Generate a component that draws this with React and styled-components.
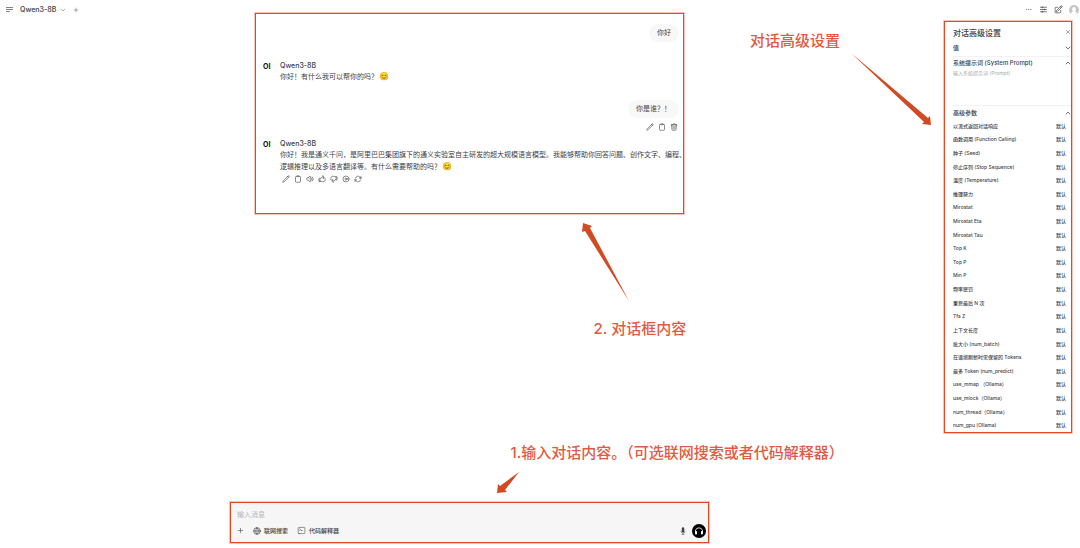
import React from 'react'
import styled, { createGlobalStyle } from 'styled-components'
import {
  HiOutlineAdjustmentsHorizontal,
  HiOutlineArrowPath,
  HiOutlineBars3BottomLeft,
  HiOutlineChevronDown,
  HiOutlineChevronUp,
  HiOutlineClipboard,
  HiOutlineCommandLine,
  HiOutlineEllipsisHorizontal,
  HiOutlineHandThumbDown,
  HiOutlineHandThumbUp,
  HiOutlinePencil,
  HiOutlinePencilSquare,
  HiOutlinePlayCircle,
  HiOutlinePlus,
  HiOutlineSpeakerWave,
  HiOutlineTrash,
  HiOutlineXMark,
  HiMicrophone
} from 'react-icons/hi2'
import { FaHeadphones } from 'react-icons/fa6'
import { Globe } from 'lucide-react'

const params = [
  '以流式返回对话响应',
  '函数调用 (Function Calling)',
  '种子 (Seed)',
  '停止序列 (Stop Sequence)',
  '温度 (Temperature)',
  '推理努力',
  'Mirostat',
  'Mirostat Eta',
  'Mirostat Tau',
  'Top K',
  'Top P',
  'Min P',
  '频率惩罚',
  '重复最后 N 次',
  'Tfs Z',
  '上下文长度',
  '批大小 (num_batch)',
  '在语境刷新时需保留的 Tokens',
  '最多 Token (num_predict)',
  'use_mmap （Ollama）',
  'use_mlock（Ollama）',
  'num_thread（Ollama）',
  'num_gpu (Ollama)'
]

const userActions = [
  ['编辑', HiOutlinePencil],
  ['复制', HiOutlineClipboard],
  ['删除', HiOutlineTrash]
]

const replyActions = [
  ['编辑', HiOutlinePencil],
  ['复制', HiOutlineClipboard],
  ['朗读', HiOutlineSpeakerWave],
  ['赞', HiOutlineHandThumbUp],
  ['踩', HiOutlineHandThumbDown],
  ['继续', HiOutlinePlayCircle],
  ['重新生成', HiOutlineArrowPath]
]

const ActionBar = ({ items, right }) => (
  <Actions $right={right}>
    {items.map(([name, Icon]) => (
      <IconButton key={name} aria-label={name}>
        <Icon size={8} strokeWidth={2} />
      </IconButton>
    ))}
  </Actions>
)

const Reply = ({ children, gap }) => (
  <ReplyView $gap={gap}>
    <Logo>OI</Logo>
    <div>
      <Name>Qwen3-8B</Name>
      {children}
    </div>
  </ReplyView>
)

const TopBar = () => (
  <Header>
    <IconButton aria-label="菜单">
      <HiOutlineBars3BottomLeft size={9} strokeWidth={2} />
    </IconButton>
    <ModelButton>
      Qwen3-8B
      <HiOutlineChevronDown size={6} strokeWidth={2} />
    </ModelButton>
    <IconButton aria-label="添加模型">
      <HiOutlinePlus size={6} strokeWidth={2} />
    </IconButton>
    <Tools>
      <IconButton aria-label="更多">
        <HiOutlineEllipsisHorizontal size={9} strokeWidth={1} />
      </IconButton>
      <IconButton aria-label="对话高级设置">
        <HiOutlineAdjustmentsHorizontal size={9} strokeWidth={2} />
      </IconButton>
      <IconButton aria-label="新对话">
        <HiOutlinePencilSquare size={9} strokeWidth={2} />
      </IconButton>
      <IconButton aria-label="用户">
        <svg width="10" height="10" viewBox="0 0 20 20">
          <circle cx="10" cy="10" r="10" fill="#c9c5c5" />
          <path d="M4 18c0-4 3-4 4-5-3-3-2-9 2-9s5 6 2 9c1 1 4 1 4 5-3 2.600-9 2.600-12 0z" fill="#fff" />
        </svg>
      </IconButton>
    </Tools>
  </Header>
)

const ChatBox = () => (
  <Chat>
    <Bubble>你好</Bubble>
    <Reply gap={18}>
      <Text>
        你好！有什么我可以帮你的吗？<Emoji>😊</Emoji>
      </Text>
    </Reply>
    <Bubble $gap={17}>你是谁？！</Bubble>
    <ActionBar items={userActions} right />
    <Reply gap={5}>
      <Text>
        你好！我是通义千问，是阿里巴巴集团旗下的通义实验室自主研发的超大规模语言模型。我能够帮助你回答问题、创作文字、编程、
        <br />
        逻辑推理以及多语言翻译等。有什么需要帮助的吗？<Emoji>😊</Emoji>
      </Text>
      <ActionBar items={replyActions} />
    </Reply>
    <ChatNote>
      <svg width="48" height="80" viewBox="0 0 48 80">
        <path d="M1 1L10 4L8 6L47 79L3 9L0 10Z" />
      </svg>
      <NoteText>2. 对话框内容</NoteText>
    </ChatNote>
  </Chat>
)

const MessageBox = () => (
  <Composer>
    <Input aria-label="输入消息" placeholder="输入消息" />
    <ComposerBar>
      <IconButton aria-label="添加">
        <HiOutlinePlus size={7} strokeWidth={2} />
      </IconButton>
      <ToolButton>
        <Globe size={8} />
        联网搜索
      </ToolButton>
      <ToolButton>
        <HiOutlineCommandLine size={9} />
        代码解释器
      </ToolButton>
      <Voice>
        <IconButton aria-label="语音输入">
          <HiMicrophone size={8} />
        </IconButton>
        <CallButton aria-label="语音通话">
          <FaHeadphones size={8} />
        </CallButton>
      </Voice>
    </ComposerBar>
    <ComposerNote>
      <NoteText>1.输入对话内容。（可选联网搜索或者代码解释器）</NoteText>
      <svg width="22" height="22" viewBox="0 0 22 22">
        <path d="M22 0L8 18L10 20L0 21L1 12L3 14Z" />
      </svg>
    </ComposerNote>
  </Composer>
)

const Settings = () => (
  <Panel>
    <PanelHead>
      <PanelTitle>对话高级设置</PanelTitle>
      <IconButton aria-label="关闭">
        <HiOutlineXMark size={6} strokeWidth={2} />
      </IconButton>
    </PanelHead>
    <Section>
      <Toggle>
        值
        <HiOutlineChevronDown size={6} strokeWidth={3} />
      </Toggle>
    </Section>
    <Section>
      <Toggle>
        系统提示词 (System Prompt)
        <HiOutlineChevronUp size={6} strokeWidth={3} />
      </Toggle>
      <Prompt aria-label="系统提示词" placeholder="输入系统提示词 (Prompt)" />
    </Section>
    <Toggle $tall>
      高级参数
      <HiOutlineChevronUp size={6} strokeWidth={3} />
    </Toggle>
    <Params>
      {params.map((name, i) => (
        <Param key={name}>
          <label htmlFor={`param-${i}`}>{name}</label>
          <button id={`param-${i}`}>默认</button>
        </Param>
      ))}
    </Params>
    <PanelNote>
      <NoteText>对话高级设置</NoteText>
      <svg width="80" height="72" viewBox="0 0 80 72">
        <path d="M0 0L77 65L79 63L80 72L71 71L73 69Z" />
      </svg>
    </PanelNote>
  </Panel>
)

const App = () => {
  return (
    <Page>
      <GlobalStyle />
      <TopBar />
      <Body>
        <Main>
          <ChatBox />
          <MessageBox />
        </Main>
        <Side>
          <Settings />
        </Side>
      </Body>
    </Page>
  )
}

const GlobalStyle = createGlobalStyle`
  * {
    box-sizing: border-box;
  }
  body {
    margin: 0;
    background: #fff;
    color: #3c3f48;
    font-family: Inter, "Noto Sans CJK SC", sans-serif;
  }
  button, input, textarea {
    margin: 0;
    padding: 0;
    border: 0;
    background: none;
    color: inherit;
    font: inherit;
  }
  svg {
    display: block;
    flex: none;
  }
`

const Page = styled.div`
  min-height: 100vh;
  display: flex;
  flex-direction: column;
`

const Header = styled.header`
  height: 19px;
  padding: 0 1px 0 5px;
  display: flex;
  align-items: center;
  color: #555;
`

const IconButton = styled.button`
  display: flex;
  align-items: center;
  justify-content: center;
`

const ModelButton = styled.button`
  margin: 0 7px 0 6px;
  display: flex;
  align-items: center;
  gap: 4px;
  font-size: 7px;
  font-weight: 600;
`

const Tools = styled.div`
  margin-left: auto;
  display: flex;
  gap: 6px;
`

const Body = styled.div`
  flex: 1;
  display: flex;
  /* the chat frame reaches up beside the header's buttons */
  margin-top: -6px;
`

const Main = styled.main`
  flex: 1;
  display: flex;
  flex-direction: column;
  align-items: center;
`

const Frame = styled.section`
  position: relative;
  border: 1px solid #e8461d;
  box-shadow: 0 0 0 1px #f8c4b6;
`

const Chat = styled(Frame)`
  width: 100%;
  max-width: 429px;
  padding: 10px 4px 28px 7px;
  display: flex;
  flex-direction: column;
`

const Bubble = styled.div`
  align-self: flex-end;
  height: 18px;
  margin-top: ${(props) => props.$gap || 0}px;
  padding: 0 8px;
  border-radius: 9px;
  background: #f8f8f8;
  font-size: 7px;
  line-height: 18px;
`

const Actions = styled.div`
  height: 12px;
  margin-top: ${(props) => (props.$right ? 3 : 0)}px;
  padding: 0 1px 0 2px;
  display: flex;
  align-items: center;
  justify-content: ${(props) => (props.$right ? 'flex-end' : 'flex-start')};
  gap: 4px;
  color: #555;
`

const ReplyView = styled.div`
  margin-top: ${(props) => props.$gap}px;
  display: grid;
  grid-template-columns: 17px 1fr;
`

const Logo = styled.div`
  font-size: 7px;
  font-weight: 700;
  line-height: 14px;
  color: #111;
`

const Name = styled.div`
  font-size: 7px;
  font-weight: 500;
  line-height: 11px;
`

const Text = styled.p`
  margin: 0;
  font-size: 7px;
  line-height: 12px;
  white-space: nowrap;
`

const Emoji = styled.span`
  margin-left: 1px;
  font-size: 8px;
  line-height: 8px;
`

const Composer = styled(Frame)`
  width: 100%;
  max-width: 479px;
  margin: auto 0 5px;
  padding: 5px 2px 4px 6px;
  background: #f6f6f6;
`

const Input = styled.input`
  display: block;
  width: 100%;
  height: 13px;
  margin-bottom: 2px;
  font-size: 7px;
  outline: 0;
  &::placeholder {
    color: #b4b7bd;
    opacity: 1;
  }
`

const ComposerBar = styled.div`
  height: 15px;
  display: flex;
  align-items: center;
  gap: 9px;
  color: #444;
`

const ToolButton = styled.button`
  display: flex;
  align-items: center;
  gap: 3px;
  font-size: 6px;
  font-weight: 500;
`

const Voice = styled.div`
  margin-left: auto;
  display: flex;
  align-items: center;
  gap: 5px;
`

const CallButton = styled(IconButton)`
  width: 14px;
  height: 14px;
  border-radius: 50%;
  background: #000;
  color: #fff;
`

const Side = styled.aside`
  width: 141px;
  padding: 8px 8px 0 5px;
`

const Panel = styled(Frame)`
  padding-left: 8px;
`

const PanelHead = styled.div`
  height: 20px;
  display: flex;
  align-items: center;
  justify-content: space-between;
`

const PanelTitle = styled.h2`
  margin: 0;
  font-size: 8px;
  font-weight: 500;
`

const Section = styled.div`
  padding-bottom: 3px;
  border-bottom: 1px solid #f2f2f2;
`

const Toggle = styled.button`
  width: 100%;
  height: ${(props) => (props.$tall ? 13 : 11)}px;
  display: flex;
  align-items: center;
  justify-content: space-between;
  font-size: 6px;
  font-weight: 500;
`

const Prompt = styled.textarea`
  display: block;
  width: 100%;
  height: 34px;
  font-size: 5px;
  line-height: 10px;
  resize: none;
  outline: 0;
  &::placeholder {
    color: #aaa;
    opacity: 1;
  }
`

const Params = styled.ul`
  height: 313px;
  margin: 0;
  padding: 0 5px 0 0;
  list-style: none;
  display: grid;
  grid-auto-rows: 1fr;
  font-size: 5px;
  font-weight: 500;
  line-height: 8px;
`

const Param = styled.li`
  display: flex;
  align-items: center;
  justify-content: space-between;
  white-space: nowrap;
`

/* red notes that point at the framed areas */
const Note = styled.div`
  position: absolute;
  display: flex;
  flex-direction: column;
  color: #e25a42;
  path {
    fill: #d24a22;
  }
`

const NoteText = styled.span`
  font-size: 15px;
  font-weight: 500;
  line-height: 20px;
  white-space: nowrap;
`

const ChatNote = styled(Note)`
  top: 100%;
  left: 50%;
  padding: 9px 0 0 112px;
  gap: 17px;
  ${NoteText} {
    margin-left: 12px;
  }
`

const ComposerNote = styled(Note)`
  bottom: 100%;
  left: 50%;
  padding: 0 0 9px 27px;
  gap: 9px;
  ${NoteText} {
    margin-left: 14px;
  }
`

const PanelNote = styled(Note)`
  top: 9px;
  right: 100%;
  padding-right: 14px;
  gap: 2px;
  align-items: flex-end;
  ${NoteText} {
    margin-right: 91px;
  }
`

export default App
